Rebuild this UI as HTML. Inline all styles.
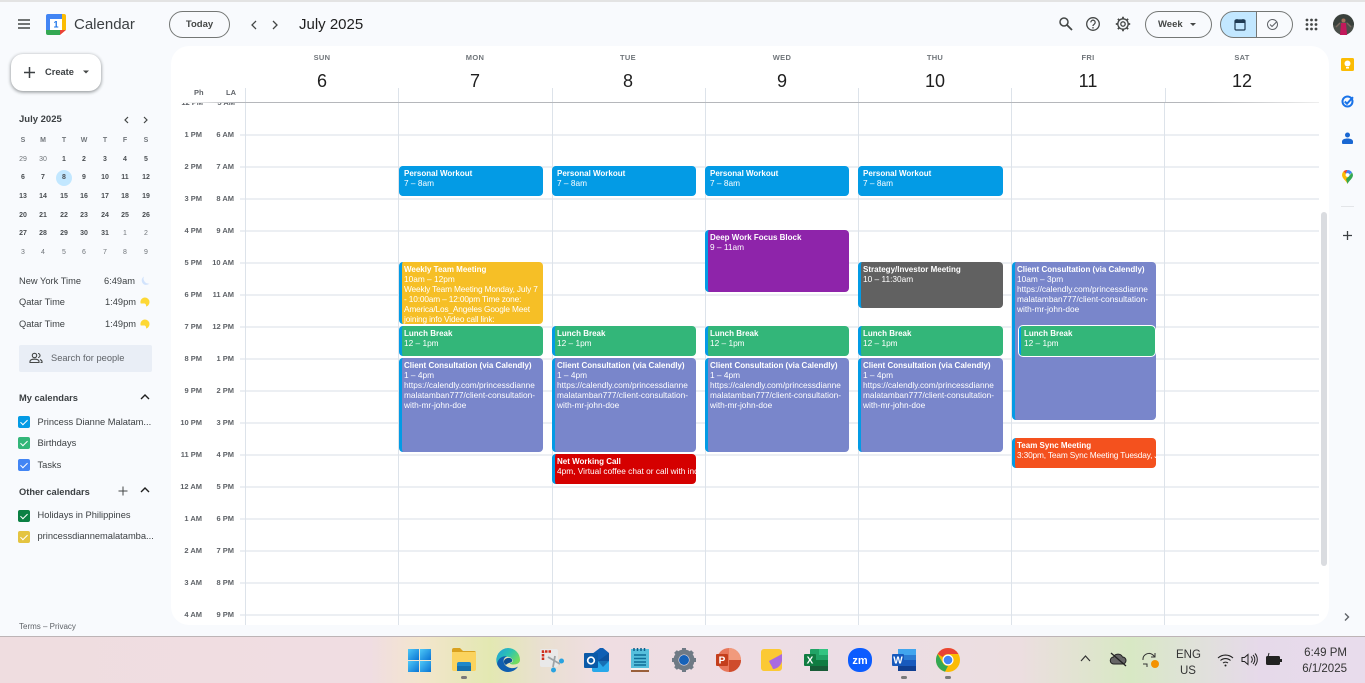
<!DOCTYPE html>
<html><head><meta charset="utf-8"><title>Calendar</title>
<style>
*{box-sizing:border-box}
html,body{margin:0;padding:0;width:1365px;height:683px;overflow:hidden;background:#f8fafd;font-family:"Liberation Sans",sans-serif;color:#1f1f1f}
.a{position:absolute;white-space:nowrap}
.panel{position:absolute;left:171px;top:46px;width:1158px;height:579px;background:#fff;border-radius:18px;overflow:hidden}
.ht{position:absolute;left:240px;width:1079px;height:2px;background:#eceff3}
.v{position:absolute;top:88px;height:537px;width:1px;background:#dde3ea}
.tl{position:absolute;font-size:7.5px;color:#5f6368;text-align:right;white-space:nowrap;font-weight:bold;line-height:10px;transform:translate(-1px,1px)}
.dn{position:absolute;top:53px;width:60px;text-align:center;font-size:7.5px;color:#70757a;font-weight:bold;letter-spacing:.3px}
.dd{position:absolute;top:70px;width:60px;text-align:center;font-size:18px;color:#1f1f1f;line-height:22px}
.ev{position:absolute;border-radius:4px;border-left:3px solid #039be5;color:#fff;font-size:8.3px;line-height:10px;padding:2px 0 0 2px;overflow:hidden;white-space:nowrap}
.ev b{display:block;font-weight:bold;font-size:8px;position:relative;top:1px}
.ev span{display:block}
.ev .t{letter-spacing:-.15px}
.m{position:absolute;font-size:7px;width:20px;text-align:center;color:#4a4e52;line-height:10px;font-weight:bold;transform:translateY(1px)}
.mu{color:#70757a;font-weight:normal}
.s{position:absolute;font-size:9.3px;color:#3c4043;white-space:nowrap;line-height:12px}
.b{position:absolute;font-size:9px;color:#1f1f1f;white-space:nowrap;line-height:12px}
.cb{position:absolute;left:18px;width:12px;height:12px;border-radius:2px}
.cb:after{content:"";position:absolute;left:4px;top:2px;width:3px;height:6px;border:solid #fff;border-width:0 1.4px 1.4px 0;transform:rotate(45deg)}
.task{position:absolute;left:0;top:636px;width:1365px;height:47px;border-top:1px solid #bdb4b6;background:linear-gradient(90deg,#efdde0 0,#f0dde2 370px,#f3e5cd 420px,#e3e8b2 490px,#e9e0d0 540px,#efdde2 600px,#ecdde5 850px,#ecdee0 1020px,#d8e8c4 1130px,#dfe2d8 1190px,#e6d9ea 1260px,#e8dcec 1365px)}
svg{position:absolute;display:block}
</style></head><body>
<div class="a" style="left:0;top:0;width:1365px;height:2px;background:#e3e3e3"></div>

<!-- Header -->
<svg style="left:17px;top:18px" width="14" height="12" viewBox="0 0 14 12"><path d="M1 2h12M1 6h12M1 10h12" stroke="#444746" stroke-width="1.4"/></svg>
<svg style="left:45px;top:13px" width="22" height="23" viewBox="0 0 22 23"><rect x="1" y="1" width="20" height="21" rx="2" fill="#fff"/><path d="M5 1h12v5H5z" fill="#4285f4"/><path d="M1 3a2 2 0 0 1 2-2h2v16H1z" fill="#4285f4"/><path d="M17 1h2a2 2 0 0 1 2 2v14h-4z" fill="#fbbc04" /><path d="M1 17h14v5H3a2 2 0 0 1-2-2z" fill="#34a853"/><path d="M15 17h6l-6 5z" fill="#ea4335"/><text x="11" y="14.5" font-size="9" font-family="Liberation Sans" font-weight="bold" fill="#1a73e8" text-anchor="middle">1</text></svg>
<div class="a" style="left:74px;top:15px;font-size:15px;color:#3c4043;line-height:20px">Calendar</div>
<div class="a" style="left:169px;top:11px;width:61px;height:27px;border:1px solid #747775;border-radius:14px;text-align:center;font-size:9.5px;line-height:25px;font-weight:bold;color:#444746">Today</div>
<svg style="left:249px;top:19px" width="10" height="12" viewBox="0 0 10 12"><path d="M7 2 3 6l4 4" fill="none" stroke="#444746" stroke-width="1.3"/></svg>
<svg style="left:270px;top:19px" width="10" height="12" viewBox="0 0 10 12"><path d="M3 2l4 4-4 4" fill="none" stroke="#444746" stroke-width="1.3"/></svg>
<div class="a" style="left:299px;top:15px;font-size:15px;color:#1f1f1f;line-height:20px">July 2025</div>

<svg style="left:1058px;top:16px" width="15" height="15" viewBox="0 0 15 15"><circle cx="6" cy="6" r="4" fill="none" stroke="#444746" stroke-width="1.5"/><path d="M9 9l5 5" stroke="#444746" stroke-width="1.8"/></svg>
<svg style="left:1085px;top:16px" width="16" height="16" viewBox="0 0 16 16"><circle cx="8" cy="8" r="6.3" fill="none" stroke="#444746" stroke-width="1.3"/><path d="M5.8 6.4a2.2 2.2 0 1 1 3.4 1.8c-.8.5-1.2.9-1.2 1.8" fill="none" stroke="#444746" stroke-width="1.2"/><circle cx="8" cy="11.8" r=".8" fill="#444746"/></svg>
<svg style="left:1115px;top:16px" width="16" height="16" viewBox="0 0 16 16"><circle cx="8" cy="8" r="2.2" fill="none" stroke="#444746" stroke-width="1.3"/><circle cx="8" cy="8" r="5.2" fill="none" stroke="#444746" stroke-width="1.3"/><path d="M8 .8v2.4M8 12.8v2.4M.8 8h2.4M12.8 8h2.4M2.9 2.9l1.7 1.7M11.4 11.4l1.7 1.7M2.9 13.1l1.7-1.7M11.4 4.6l1.7-1.7" stroke="#444746" stroke-width="1.8"/></svg>
<div class="a" style="left:1145px;top:11px;width:67px;height:27px;border:1px solid #747775;border-radius:14px;font-size:9.5px;line-height:25px;font-weight:bold;color:#444746;padding-left:12px">Week</div>
<svg style="left:1189px;top:22px" width="8" height="5" viewBox="0 0 8 5"><path d="M1 1h6L4 4z" fill="#444746"/></svg>
<div class="a" style="left:1220px;top:11px;width:37px;height:27px;border:1px solid #747775;border-radius:14px 0 0 14px;background:#c2e7ff"></div>
<div class="a" style="left:1256px;top:11px;width:37px;height:27px;border:1px solid #747775;border-radius:0 14px 14px 0"></div>
<svg style="left:1234px;top:18px" width="12" height="13" viewBox="0 0 12 13"><rect x="1" y="2" width="10" height="10" rx="1" fill="none" stroke="#1f3a52" stroke-width="1.2"/><rect x="1" y="2" width="10" height="3" fill="#1f3a52"/><path d="M3 1v1M9 1v1" stroke="#1f3a52"/></svg>
<svg style="left:1266px;top:18px" width="13" height="13" viewBox="0 0 13 13"><circle cx="6.5" cy="6.5" r="5" fill="none" stroke="#5f6368" stroke-width="1"/><path d="M4 6.500l2 2 5-5" fill="none" stroke="#5f6368" stroke-width="1.1"/></svg>
<svg style="left:1305px;top:18px" width="13" height="13" viewBox="0 0 13 13" fill="#444746"><circle cx="2" cy="2" r="1.4"/><circle cx="6.5" cy="2" r="1.4"/><circle cx="11" cy="2" r="1.4"/><circle cx="2" cy="6.5" r="1.4"/><circle cx="6.5" cy="6.5" r="1.4"/><circle cx="11" cy="6.5" r="1.4"/><circle cx="2" cy="11" r="1.4"/><circle cx="6.5" cy="11" r="1.4"/><circle cx="11" cy="11" r="1.4"/></svg>
<svg style="left:1333px;top:14px" width="21" height="21" viewBox="0 0 21 21"><circle cx="10.5" cy="10.5" r="10.5" fill="#4a4f4a"/><path d="M0 11a10.5 10.5 0 0 1 21 0l-4 1-3-4H7l-3 4z" fill="#39403c"/><path d="M8 9h5l1 12H7z" fill="#c2185b"/><circle cx="10.5" cy="6.5" r="2" fill="#a1705a"/><path d="M3 13l4-4M18 13l-4-4" stroke="#7b6a60" stroke-width="1.4"/></svg>

<!-- Left side -->
<div class="a" style="left:11px;top:54px;width:90px;height:37px;background:#fff;border-radius:12px;box-shadow:0 1px 3px rgba(60,64,67,.45),0 1px 3px 1px rgba(60,64,67,.15)"></div>
<svg style="left:23px;top:66px" width="13" height="13" viewBox="0 0 13 13"><path d="M6.5 1v11M1 6.5h11" stroke="#3c4043" stroke-width="1.5"/></svg>
<div class="a" style="left:45px;top:66px;font-size:9.3px;line-height:12px;font-weight:bold;color:#3c4043">Create</div>
<svg style="left:82px;top:69px" width="8" height="6" viewBox="0 0 8 6"><path d="M1 1.500h6L4 4.500z" fill="#444746"/></svg>

<div class="b" style="left:19px;top:114px;font-size:9.5px;font-weight:bold;color:#3c4043">July 2025</div>
<svg style="left:122px;top:115px" width="8" height="10" viewBox="0 0 8 10"><path d="M6 2 3 5l3 3" fill="none" stroke="#444746" stroke-width="1.2"/></svg>
<svg style="left:142px;top:115px" width="8" height="10" viewBox="0 0 8 10"><path d="M2 2l3 3-3 3" fill="none" stroke="#444746" stroke-width="1.2"/></svg>

<div class="m" style="left:13px;top:135px;color:#70757a">S</div><div class="m" style="left:33px;top:135px;color:#70757a">M</div><div class="m" style="left:54px;top:135px;color:#70757a">T</div><div class="m" style="left:74px;top:135px;color:#70757a">W</div><div class="m" style="left:95px;top:135px;color:#70757a">T</div><div class="m" style="left:115px;top:135px;color:#70757a">F</div><div class="m" style="left:136px;top:135px;color:#70757a">S</div>

<div class="m mu" style="left:13px;top:154px">29</div><div class="m mu" style="left:33px;top:154px">30</div><div class="m" style="left:54px;top:154px">1</div><div class="m" style="left:74px;top:154px">2</div><div class="m" style="left:95px;top:154px">3</div><div class="m" style="left:115px;top:154px">4</div><div class="m" style="left:136px;top:154px">5</div>
<div class="a" style="left:56px;top:170px;width:16px;height:16px;border-radius:50%;background:#c2e7ff"></div>
<div class="m" style="left:13px;top:172px">6</div><div class="m" style="left:33px;top:172px">7</div><div class="m" style="left:54px;top:172px">8</div><div class="m" style="left:74px;top:172px">9</div><div class="m" style="left:95px;top:172px">10</div><div class="m" style="left:115px;top:172px">11</div><div class="m" style="left:136px;top:172px">12</div>
<div class="m" style="left:13px;top:191px">13</div><div class="m" style="left:33px;top:191px">14</div><div class="m" style="left:54px;top:191px">15</div><div class="m" style="left:74px;top:191px">16</div><div class="m" style="left:95px;top:191px">17</div><div class="m" style="left:115px;top:191px">18</div><div class="m" style="left:136px;top:191px">19</div>
<div class="m" style="left:13px;top:210px">20</div><div class="m" style="left:33px;top:210px">21</div><div class="m" style="left:54px;top:210px">22</div><div class="m" style="left:74px;top:210px">23</div><div class="m" style="left:95px;top:210px">24</div><div class="m" style="left:115px;top:210px">25</div><div class="m" style="left:136px;top:210px">26</div>
<div class="m" style="left:13px;top:228px">27</div><div class="m" style="left:33px;top:228px">28</div><div class="m" style="left:54px;top:228px">29</div><div class="m" style="left:74px;top:228px">30</div><div class="m" style="left:95px;top:228px">31</div><div class="m mu" style="left:115px;top:228px">1</div><div class="m mu" style="left:136px;top:228px">2</div>
<div class="m mu" style="left:13px;top:247px">3</div><div class="m mu" style="left:33px;top:247px">4</div><div class="m mu" style="left:54px;top:247px">5</div><div class="m mu" style="left:74px;top:247px">6</div><div class="m mu" style="left:95px;top:247px">7</div><div class="m mu" style="left:115px;top:247px">8</div><div class="m mu" style="left:136px;top:247px">9</div>

<div class="s" style="left:19px;top:275px">New York Time</div><div class="s" style="left:104px;top:275px">6:49am</div>
<svg style="left:140px;top:276px" width="10" height="10" viewBox="0 0 10 10"><path d="M4 .5a4.500 4.500 0 1 0 5.500 7A5 5 0 0 1 4 .5z" fill="#d2e3fc"/></svg>
<div class="s" style="left:19px;top:296px">Qatar Time</div><div class="s" style="left:105px;top:296px">1:49pm</div>
<svg style="left:140px;top:297px" width="10" height="10" viewBox="0 0 10 10"><path d="M5 .5a4.500 4.500 0 0 1 4.500 4.500c0 2.500-2 4.500-3.500 4.500.5-2-1-3-1.500-3H.7A4.500 4.500 0 0 1 5 .5z" fill="#fdd835"/></svg>
<div class="s" style="left:19px;top:318px">Qatar Time</div><div class="s" style="left:105px;top:318px">1:49pm</div>
<svg style="left:140px;top:319px" width="10" height="10" viewBox="0 0 10 10"><path d="M5 .5a4.500 4.500 0 0 1 4.500 4.500c0 2.500-2 4.500-3.500 4.500.5-2-1-3-1.500-3H.7A4.500 4.500 0 0 1 5 .5z" fill="#fdd835"/></svg>

<div class="a" style="left:19px;top:345px;width:133px;height:27px;background:#e9eef6;border-radius:2px"></div>
<svg style="left:29px;top:352px" width="14" height="12" viewBox="0 0 14 12"><circle cx="5.500" cy="3.500" r="2.200" fill="none" stroke="#444746" stroke-width="1.100"/><path d="M1 10.500V9.500c0-1.500 2-2.300 4.500-2.300S10 8 10 9.500v1zM9 1.500a2 2 0 0 1 0 4M11 7.500c1 .4 2 1 2 2v1h-1.500" fill="none" stroke="#444746" stroke-width="1.100"/></svg>
<div class="s" style="left:51px;top:352px;color:#5f6368">Search for people</div>

<div class="b" style="left:19px;top:392px;font-weight:bold;color:#3c4043;font-size:9.3px">My calendars</div>
<svg style="left:140px;top:393px" width="10" height="8" viewBox="0 0 10 8"><path d="M1 6l4-4 4 4" fill="none" stroke="#1f1f1f" stroke-width="1.400"/></svg>
<div class="cb" style="top:416px;background:#039be5"></div><div class="s" style="left:37.500px;top:416px">Princess Dianne Malatam...</div>
<div class="cb" style="top:437px;background:#33b679"></div><div class="s" style="left:37.500px;top:437px">Birthdays</div>
<div class="cb" style="top:459px;background:#4285f4"></div><div class="s" style="left:37.500px;top:459px">Tasks</div>
<div class="b" style="left:19px;top:486px;font-weight:bold;color:#3c4043;font-size:9.300px">Other calendars</div>
<svg style="left:117px;top:485px" width="12" height="12" viewBox="0 0 12 12"><path d="M6 1.500v9M1.500 6h9" stroke="#444746" stroke-width="1"/></svg>
<svg style="left:140px;top:486px" width="10" height="8" viewBox="0 0 10 8"><path d="M1 6l4-4 4 4" fill="none" stroke="#1f1f1f" stroke-width="1.400"/></svg>
<div class="cb" style="top:510px;background:#0b8043"></div><div class="s" style="left:37.500px;top:509px">Holidays in Philippines</div>
<div class="cb" style="top:531px;background:#e4c441"></div><div class="s" style="left:37.500px;top:530px">princessdiannemalatamba...</div>
<div class="a" style="left:19px;top:622px;font-size:8px;color:#5f6368;line-height:10px">Terms – Privacy</div>

<!-- Panel -->
<div class="panel"></div>
<div class="dn" style="left:292px">SUN</div><div class="dd" style="left:292px">6</div>
<div class="dn" style="left:445px">MON</div><div class="dd" style="left:445px">7</div>
<div class="dn" style="left:598px">TUE</div><div class="dd" style="left:598px">8</div>
<div class="dn" style="left:752px">WED</div><div class="dd" style="left:752px">9</div>
<div class="dn" style="left:905px">THU</div><div class="dd" style="left:905px">10</div>
<div class="dn" style="left:1058px">FRI</div><div class="dd" style="left:1058px">11</div>
<div class="dn" style="left:1212px">SAT</div><div class="dd" style="left:1212px">12</div>
<div class="a" style="left:194px;top:88px;font-size:7.500px;font-weight:bold;color:#5f6368;line-height:10px">Ph</div>
<div class="a" style="left:226px;top:88px;font-size:7.500px;font-weight:bold;color:#5f6368;line-height:10px">LA</div>

<!-- Grid lines -->
<div class="ht" style="top:134px"></div>
<div class="ht" style="top:166px"></div>
<div class="ht" style="top:198px"></div>
<div class="ht" style="top:230px"></div>
<div class="ht" style="top:262px"></div>
<div class="ht" style="top:294px"></div>
<div class="ht" style="top:326px"></div>
<div class="ht" style="top:358px"></div>
<div class="ht" style="top:390px"></div>
<div class="ht" style="top:422px"></div>
<div class="ht" style="top:454px"></div>
<div class="ht" style="top:486px"></div>
<div class="ht" style="top:518px"></div>
<div class="ht" style="top:550px"></div>
<div class="ht" style="top:582px"></div>
<div class="ht" style="top:614px"></div>
<div class="v" style="left:245px"></div><div class="v" style="left:398px"></div><div class="v" style="left:552px"></div><div class="v" style="left:705px"></div><div class="v" style="left:858px"></div><div class="v" style="left:1011px"></div><div class="v" style="left:1165px;height:15px"></div><div class="v" style="left:1164px;top:103px;height:522px"></div>

<!-- Time labels -->
<div class="a" style="left:177px;top:103px;width:26px;height:4px;overflow:hidden"><div class="tl" style="left:0;top:-5px;width:26px;transform:none">12 PM</div></div>
<div class="a" style="left:209px;top:103px;width:26px;height:4px;overflow:hidden"><div class="tl" style="left:0;top:-5px;width:26px;transform:none">5 AM</div></div>
<div class="tl" style="left:178px;top:129px;width:25px">1 PM</div><div class="tl" style="left:210px;top:129px;width:25px">6 AM</div>
<div class="tl" style="left:178px;top:161px;width:25px">2 PM</div><div class="tl" style="left:210px;top:161px;width:25px">7 AM</div>
<div class="tl" style="left:178px;top:193px;width:25px">3 PM</div><div class="tl" style="left:210px;top:193px;width:25px">8 AM</div>
<div class="tl" style="left:178px;top:225px;width:25px">4 PM</div><div class="tl" style="left:210px;top:225px;width:25px">9 AM</div>
<div class="tl" style="left:178px;top:257px;width:25px">5 PM</div><div class="tl" style="left:210px;top:257px;width:25px">10 AM</div>
<div class="tl" style="left:178px;top:289px;width:25px">6 PM</div><div class="tl" style="left:210px;top:289px;width:25px">11 AM</div>
<div class="tl" style="left:178px;top:321px;width:25px">7 PM</div><div class="tl" style="left:210px;top:321px;width:25px">12 PM</div>
<div class="tl" style="left:178px;top:353px;width:25px">8 PM</div><div class="tl" style="left:210px;top:353px;width:25px">1 PM</div>
<div class="tl" style="left:178px;top:385px;width:25px">9 PM</div><div class="tl" style="left:210px;top:385px;width:25px">2 PM</div>
<div class="tl" style="left:178px;top:417px;width:25px">10 PM</div><div class="tl" style="left:210px;top:417px;width:25px">3 PM</div>
<div class="tl" style="left:178px;top:449px;width:25px">11 PM</div><div class="tl" style="left:210px;top:449px;width:25px">4 PM</div>
<div class="tl" style="left:178px;top:481px;width:25px">12 AM</div><div class="tl" style="left:210px;top:481px;width:25px">5 PM</div>
<div class="tl" style="left:178px;top:513px;width:25px">1 AM</div><div class="tl" style="left:210px;top:513px;width:25px">6 PM</div>
<div class="tl" style="left:178px;top:545px;width:25px">2 AM</div><div class="tl" style="left:210px;top:545px;width:25px">7 PM</div>
<div class="tl" style="left:178px;top:577px;width:25px">3 AM</div><div class="tl" style="left:210px;top:577px;width:25px">8 PM</div>
<div class="tl" style="left:178px;top:609px;width:25px">4 AM</div><div class="tl" style="left:210px;top:609px;width:25px">9 PM</div>
<div class="a" style="left:179px;top:102px;width:1140px;height:1px;background:linear-gradient(90deg,#fff 0,#b5b7bb 5%,#b5b7bb 90%,#eee 100%)"></div>
<div class="a" style="left:1321px;top:212px;width:6px;height:354px;background:#dadce0;border-radius:3px"></div>

<!-- Events -->
<div class="ev" style="left:399px;top:166px;width:144px;height:30px;background:#039be5"><b>Personal Workout</b><span>7 – 8am</span></div>
<div class="ev" style="left:552px;top:166px;width:144px;height:30px;background:#039be5"><b>Personal Workout</b><span>7 – 8am</span></div>
<div class="ev" style="left:705px;top:166px;width:144px;height:30px;background:#039be5"><b>Personal Workout</b><span>7 – 8am</span></div>
<div class="ev" style="left:858px;top:166px;width:145px;height:30px;background:#039be5"><b>Personal Workout</b><span>7 – 8am</span></div>

<div class="ev" style="left:705px;top:230px;width:144px;height:62px;background:#8e24aa"><b>Deep Work Focus Block</b><span>9 – 11am</span></div>
<div class="ev" style="left:399px;top:262px;width:144px;height:62px;background:#f6bf26"><b>Weekly Team Meeting</b><span>10am – 12pm</span><span class="t">Weekly Team Meeting Monday, July 7</span><span class="t">- 10:00am – 12:00pm Time zone:</span><span class="t">America/Los_Angeles Google Meet</span><span class="t">joining info Video call link:</span></div>
<div class="ev" style="left:858px;top:262px;width:145px;height:46px;background:#616161"><b>Strategy/Investor Meeting</b><span>10 – 11:30am</span></div>
<div class="ev" style="left:1012px;top:262px;width:144px;height:158px;background:#7986cb"><b>Client Consultation (via Calendly)</b><span>10am – 3pm</span><span>https://calendly.com/princessdianne</span><span>malatamban777/client-consultation-</span><span>with-mr-john-doe</span></div>

<div class="ev" style="left:399px;top:326px;width:144px;height:30px;background:#33b679"><b>Lunch Break</b><span>12 – 1pm</span></div>
<div class="ev" style="left:552px;top:326px;width:144px;height:30px;background:#33b679"><b>Lunch Break</b><span>12 – 1pm</span></div>
<div class="ev" style="left:705px;top:326px;width:144px;height:30px;background:#33b679"><b>Lunch Break</b><span>12 – 1pm</span></div>
<div class="ev" style="left:858px;top:326px;width:145px;height:30px;background:#33b679"><b>Lunch Break</b><span>12 – 1pm</span></div>
<div class="a" style="left:1018px;top:325px;width:138px;height:32px;border:1px solid #fff;border-radius:5px;background:#33b679;overflow:hidden"><div style="position:absolute;left:0;top:0;width:2px;height:30px;background:#039be5"></div><div style="position:absolute;left:5px;top:2px;color:#fff;font-size:8.300px;line-height:10px"><b style="display:block;font-size:8px;position:relative;top:1px">Lunch Break</b>12 – 1pm</div></div>

<div class="ev" style="left:399px;top:358px;width:144px;height:94px;background:#7986cb"><b>Client Consultation (via Calendly)</b><span>1 – 4pm</span><span>https://calendly.com/princessdianne</span><span>malatamban777/client-consultation-</span><span>with-mr-john-doe</span></div>
<div class="ev" style="left:552px;top:358px;width:144px;height:94px;background:#7986cb"><b>Client Consultation (via Calendly)</b><span>1 – 4pm</span><span>https://calendly.com/princessdianne</span><span>malatamban777/client-consultation-</span><span>with-mr-john-doe</span></div>
<div class="ev" style="left:705px;top:358px;width:144px;height:94px;background:#7986cb"><b>Client Consultation (via Calendly)</b><span>1 – 4pm</span><span>https://calendly.com/princessdianne</span><span>malatamban777/client-consultation-</span><span>with-mr-john-doe</span></div>
<div class="ev" style="left:858px;top:358px;width:145px;height:94px;background:#7986cb"><b>Client Consultation (via Calendly)</b><span>1 – 4pm</span><span>https://calendly.com/princessdianne</span><span>malatamban777/client-consultation-</span><span>with-mr-john-doe</span></div>

<div class="ev" style="left:552px;top:454px;width:144px;height:30px;background:#d50000"><b>Net Working Call</b><span>4pm, Virtual coffee chat or call with industry peer</span></div>
<div class="ev" style="left:1012px;top:438px;width:144px;height:30px;background:#f4511e"><b>Team Sync Meeting</b><span class="t">3:30pm, Team Sync Meeting Tuesday, July 8</span></div>

<!-- Right rail -->
<svg style="left:1341px;top:58px" width="13" height="13" viewBox="0 0 13 13"><rect width="13" height="13" rx="1.500" fill="#fbbc04"/><circle cx="6.500" cy="5.500" r="3" fill="#fff"/><rect x="5" y="9" width="3" height="1.500" fill="#fff"/></svg>
<svg style="left:1341px;top:95px" width="13" height="13" viewBox="0 0 13 13"><circle cx="6.500" cy="6.500" r="5" fill="none" stroke="#1a73e8" stroke-width="2"/><path d="M3.800 6.500l2.200 2.200 6-6.500" fill="none" stroke="#1a73e8" stroke-width="2"/></svg>
<svg style="left:1342px;top:132px" width="11" height="13" viewBox="0 0 11 13"><circle cx="5.500" cy="3" r="2.500" fill="#1967d2"/><path d="M1 12a1 1 0 0 1-1-1V9.500C0 7.500 2.500 6.500 5.500 6.500s5.500 1 5.500 3V11a1 1 0 0 1-1 1z" fill="#1967d2"/></svg>
<svg style="left:1342px;top:170px" width="11" height="14" viewBox="0 0 11 14"><path d="M5.500 14C4.500 11 0 8.500 0 5a5.500 5.500 0 0 1 1.600-3.800L5.500 5z" fill="#fbbc04"/><path d="M1.600 1.200A5.500 5.500 0 0 1 5.500 0L3.700 3.500z" fill="#ea4335"/><path d="M5.500 0A5.500 5.500 0 0 1 10 2.500L7 5 3.700 3.300z" fill="#4285f4"/><path d="M10 2.500A5.500 5.500 0 0 1 11 5c0 3.500-4.500 6-5.500 9L4 9l3-3z" fill="#34a853"/><circle cx="5.500" cy="5" r="1.900" fill="#fff"/></svg>
<div class="a" style="left:1341px;top:206px;width:13px;height:1px;background:#e3e5e8"></div>
<svg style="left:1341px;top:229px" width="13" height="13" viewBox="0 0 13 13"><path d="M6.500 2v9M2 6.500h9" stroke="#3c4043" stroke-width="1.300"/></svg>
<svg style="left:1343px;top:612px" width="8" height="10" viewBox="0 0 8 10"><path d="M2 1.500 5.500 5 2 8.500" fill="none" stroke="#5f6368" stroke-width="1.400"/></svg>

<!-- Taskbar -->
<div class="task"></div>
<!-- Start -->
<svg style="left:408px;top:649px" width="23" height="23" viewBox="0 0 23 23"><defs><linearGradient id="w" x1="0" y1="0" x2="1" y2="1"><stop offset="0" stop-color="#4dc8f7"/><stop offset="1" stop-color="#0a74d4"/></linearGradient></defs><rect width="11" height="11" fill="url(#w)"/><rect x="12" width="11" height="11" fill="url(#w)"/><rect y="12" width="11" height="11" fill="url(#w)"/><rect x="12" y="12" width="11" height="11" fill="url(#w)"/></svg>
<!-- Explorer -->
<svg style="left:452px;top:648px" width="24" height="23" viewBox="0 0 24 23"><path d="M0 2a2 2 0 0 1 2-2h6l3 3h11a2 2 0 0 1 2 2v2H0z" fill="#d9a11f"/><path d="M0 4h24v17a2 2 0 0 1-2 2H2a2 2 0 0 1-2-2z" fill="#fbd35e"/><rect x="5" y="14" width="14" height="9" rx="2" fill="#1e88c9"/><rect x="5" y="18" width="14" height="5" fill="#1570ad"/></svg>
<div class="a" style="left:461px;top:676px;width:6px;height:3px;border-radius:2px;background:#7a7a7a"></div>
<!-- Edge -->
<svg style="left:496px;top:648px" width="24" height="24" viewBox="0 0 24 24"><defs><linearGradient id="e1" x1="0" y1="0" x2="1" y2=".6"><stop offset="0" stop-color="#1f9be0"/><stop offset=".55" stop-color="#2cc4b0"/><stop offset="1" stop-color="#74dc5f"/></linearGradient></defs><path d="M12 0a12 12 0 0 1 12 12c0 3-3 4.500-6.500 4.500-3 0-3.500-1-3.500-1.500 2 0 3.500-1.500 2.500-3.500C15 9 11.500 8 8 9c-3.500 1-6 3.500-7 7A12 12 0 0 1 12 0z" fill="url(#e1)"/><path d="M1 16C2 10 7 7.500 11 8.500 8 9.500 7 12 8 15c1.500 4.500 9 7 14 3.500C20 22 16 24 12 24 6.500 24 2.500 20.500 1 16z" fill="#0f5fb0"/><path d="M8 13c.5-2 3-3.500 6-3 2 .5 3 2.500 1.500 4-1.500 1-4 1-5.500 3-1.500-1-2.500-2.500-2-4z" fill="#0c4f96"/></svg>
<!-- Snip -->
<svg style="left:540px;top:648px" width="25" height="25" viewBox="0 0 25 25"><rect y="1" width="18" height="18" rx="2" fill="#e9e9e9"/><path d="M3 12V3.500h9" fill="none" stroke="#d03020" stroke-width="2.500" stroke-dasharray="2.500 1"/><path d="M8 9l12 7M15 8l-2 11" stroke="#9ea3a6" stroke-width="1.800"/><circle cx="21.500" cy="13" r="2.500" fill="#29a3e0"/><circle cx="13.500" cy="22" r="2.500" fill="#29a3e0"/></svg>
<!-- Outlook -->
<svg style="left:584px;top:648px" width="25" height="24" viewBox="0 0 25 24"><path d="M8 6 16 0h3l6 5v8l-9 4-8-4z" fill="#0f5fb4"/><path d="M8 13h17v9a2 2 0 0 1-2 2H10a2 2 0 0 1-2-2z" fill="#28a8ea"/><path d="M14 13 25 5v8l-6 6z" fill="#0a4a8f" opacity=".6"/><rect y="5" width="14" height="15" rx="1" fill="#0a5aa8"/><circle cx="7" cy="12.500" r="3.300" fill="none" stroke="#fff" stroke-width="1.700"/></svg>
<!-- Notepad -->
<svg style="left:631px;top:648px" width="18" height="24" viewBox="0 0 18 24"><rect y="1" width="18" height="20" fill="#56bfdc"/><rect y="20" width="18" height="4" fill="#9a5f3a"/><rect y="20" width="18" height="2" fill="#f2f2f2"/><path d="M3 0v3M6.500 0v3M10 0v3M13.500 0v3" stroke="#0d5f8a" stroke-width="1.500"/><path d="M3 7h12M3 10.500h12M3 14h12M3 17h12" stroke="#0f6d97" stroke-width="1.500"/></svg>
<!-- Settings -->
<svg style="left:672px;top:648px" width="24" height="24" viewBox="0 0 24 24"><circle cx="12" cy="12" r="8" fill="none" stroke="#6f7a85" stroke-width="5"/><path d="M12 0v5M12 19v5M0 12h5M19 12h5M3.500 3.500 7 7M17 17l3.500 3.500M3.500 20.500 7 17M17 7l3.500-3.500" stroke="#6f7a85" stroke-width="4"/><circle cx="12" cy="12" r="5" fill="#1662b8"/></svg>
<!-- PowerPoint -->
<svg style="left:716px;top:648px" width="25" height="24" viewBox="0 0 25 24"><circle cx="13" cy="12" r="12" fill="#e8765a"/><path d="M13 0a12 12 0 0 1 12 12H13z" fill="#f19a7c"/><path d="M13 12h12a12 12 0 0 1-12 12z" fill="#cf4c2c"/><rect y="6" width="12" height="12" rx="1" fill="#c43e1c"/><text x="6" y="15.500" font-family="Liberation Sans" font-weight="bold" font-size="10" fill="#fff" text-anchor="middle">P</text></svg>
<!-- Sticky -->
<svg style="left:761px;top:649px" width="21" height="22" viewBox="0 0 21 22"><rect width="21" height="22" rx="3" fill="#fbc934"/><path d="M21 5 8 12c1 3 3 5 4 8 5 0 9-5 9-9z" fill="#a96be0"/></svg>
<!-- Excel -->
<svg style="left:804px;top:649px" width="24" height="22" viewBox="0 0 24 22"><rect x="6" width="18" height="22" rx="1" fill="#21a366"/><rect x="15" width="9" height="6" fill="#33c481"/><rect x="6" y="11" width="18" height="6" fill="#107c41"/><rect x="6" y="17" width="18" height="5" fill="#185c37"/><rect y="5" width="12" height="12" rx="1" fill="#107c41"/><text x="6" y="14.500" font-family="Liberation Sans" font-weight="bold" font-size="10" fill="#fff" text-anchor="middle">X</text></svg>
<!-- Zoom -->
<svg style="left:848px;top:648px" width="24" height="24" viewBox="0 0 24 24"><rect width="24" height="24" rx="11" fill="#0b5cff"/><text x="12" y="16" font-family="Liberation Sans" font-weight="bold" font-size="11" fill="#fff" text-anchor="middle">zm</text></svg>
<!-- Word -->
<svg style="left:892px;top:649px" width="24" height="22" viewBox="0 0 24 22"><rect x="6" width="18" height="22" rx="1" fill="#2b7cd3"/><rect x="6" width="18" height="6" fill="#41a5ee"/><rect x="6" y="11" width="18" height="6" fill="#185abd"/><rect x="6" y="17" width="18" height="5" fill="#103f91"/><rect y="5" width="12" height="12" rx="1" fill="#185abd"/><text x="6" y="14.500" font-family="Liberation Sans" font-weight="bold" font-size="10" fill="#fff" text-anchor="middle">W</text></svg>
<div class="a" style="left:901px;top:676px;width:6px;height:3px;border-radius:2px;background:#7a7a7a"></div>
<!-- Chrome -->
<svg style="left:936px;top:648px" width="24" height="24" viewBox="0 0 24 24"><circle cx="12" cy="12" r="12" fill="#fbbc04"/><path d="M12 0a12 12 0 0 1 10.400 6H12a6 6 0 0 0-5.200 3L1.600 6A12 12 0 0 1 12 0z" fill="#ea4335"/><path d="M1.600 6l5.200 9a6 6 0 0 0 5.200 3l-3 5.700A12 12 0 0 1 1.600 6z" fill="#34a853"/><circle cx="12" cy="12" r="5.500" fill="#fff"/><circle cx="12" cy="12" r="4.300" fill="#4285f4"/></svg>
<div class="a" style="left:945px;top:676px;width:6px;height:3px;border-radius:2px;background:#7a7a7a"></div>

<!-- Tray -->
<svg style="left:1079px;top:654px" width="13" height="9" viewBox="0 0 13 9"><path d="M2 7l4.500-5L11 7" fill="none" stroke="#333" stroke-width="1.200"/></svg>
<svg style="left:1109px;top:652px" width="19" height="15" viewBox="0 0 19 15"><path d="M5 12a3.500 3.500 0 0 1-.5-7 5 5 0 0 1 9 0 3.500 3.500 0 0 1 0 7z" fill="#666" stroke="#222" stroke-width="1"/><path d="M2 1l15 13" stroke="#222" stroke-width="1.300"/></svg>
<svg style="left:1142px;top:651px" width="18" height="18" viewBox="0 0 18 18"><path d="M1 9a6 6 0 0 1 10-5l2 2M13 2v4H9M1 13h4v3" fill="none" stroke="#333" stroke-width="1"/><circle cx="13" cy="13" r="4" fill="#f39200"/></svg>
<div class="a" style="left:1176px;top:647px;font-size:11.500px;line-height:16px;text-align:center;width:24px;color:#333">ENG<br>US</div>
<svg style="left:1217px;top:653px" width="17" height="14" viewBox="0 0 17 14"><path d="M1 5a11 11 0 0 1 15 0M3.500 7.500a7.500 7.500 0 0 1 10 0M6 10a4 4 0 0 1 5 0" fill="none" stroke="#222" stroke-width="1.100"/><circle cx="8.500" cy="12.500" r="1" fill="#222"/></svg>
<svg style="left:1241px;top:652px" width="18" height="15" viewBox="0 0 18 15"><path d="M1 5.500h2.500L7 2.500v10L3.500 9.500H1z" fill="none" stroke="#222"/><path d="M10 4.500a4 4 0 0 1 0 6M12 3a6.500 6.500 0 0 1 0 9M14 1.500a9 9 0 0 1 0 12" fill="none" stroke="#222"/></svg>
<svg style="left:1265px;top:652px" width="18" height="15" viewBox="0 0 18 15"><rect x="1.500" y="4.500" width="13" height="8" rx="1" fill="#222" stroke="#222"/><rect x="15" y="7" width="2" height="3" fill="#222"/><path d="M4 1 3 5h2L4 8" fill="none" stroke="#222"/></svg>
<div class="a" style="left:1290px;top:645px;width:57px;text-align:right;font-size:11.500px;line-height:16px;color:#333">6:49 PM<br>6/1/2025</div>
</body></html>
